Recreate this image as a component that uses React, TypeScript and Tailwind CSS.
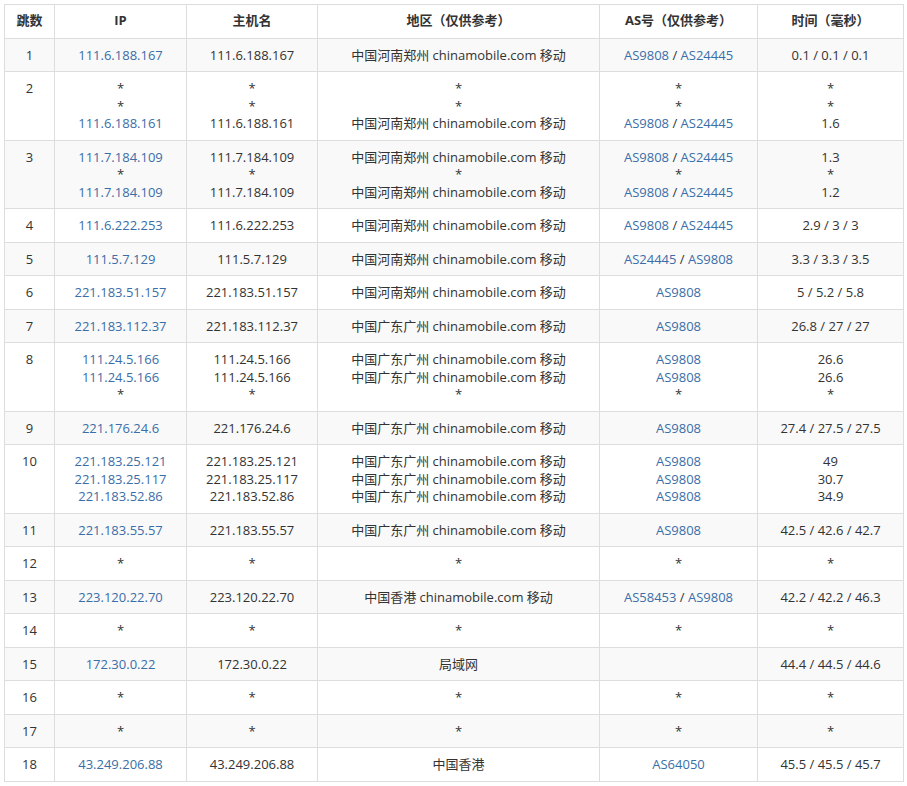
const HK = "中国香港 chinamobile.com 移动";
const ZZ = "中国河南郑州 chinamobile.com 移动";
const GZ = "中国广东广州 chinamobile.com 移动";

type Line = { ip: string; host: string; loc: string; as: string[]; t: string };
type Hop = { n: number; lines: Line[] };

const star: Line = { ip: "*", host: "*", loc: "*", as: ["*"], t: "*" };
const A1 = ["AS9808", "AS24445"];

const hops: Hop[] = [
  { n: 1, lines: [{ ip: "111.6.188.167", host: "111.6.188.167", loc: ZZ, as: A1, t: "0.1 / 0.1 / 0.1" }] },
  { n: 2, lines: [star, star, { ip: "111.6.188.161", host: "111.6.188.161", loc: ZZ, as: A1, t: "1.6" }] },
  {
    n: 3,
    lines: [
      { ip: "111.7.184.109", host: "111.7.184.109", loc: ZZ, as: A1, t: "1.3" },
      star,
      { ip: "111.7.184.109", host: "111.7.184.109", loc: ZZ, as: A1, t: "1.2" },
    ],
  },
  { n: 4, lines: [{ ip: "111.6.222.253", host: "111.6.222.253", loc: ZZ, as: A1, t: "2.9 / 3 / 3" }] },
  { n: 5, lines: [{ ip: "111.5.7.129", host: "111.5.7.129", loc: ZZ, as: ["AS24445", "AS9808"], t: "3.3 / 3.3 / 3.5" }] },
  { n: 6, lines: [{ ip: "221.183.51.157", host: "221.183.51.157", loc: ZZ, as: ["AS9808"], t: "5 / 5.2 / 5.8" }] },
  { n: 7, lines: [{ ip: "221.183.112.37", host: "221.183.112.37", loc: GZ, as: ["AS9808"], t: "26.8 / 27 / 27" }] },
  {
    n: 8,
    lines: [
      { ip: "111.24.5.166", host: "111.24.5.166", loc: GZ, as: ["AS9808"], t: "26.6" },
      { ip: "111.24.5.166", host: "111.24.5.166", loc: GZ, as: ["AS9808"], t: "26.6" },
      star,
    ],
  },
  { n: 9, lines: [{ ip: "221.176.24.6", host: "221.176.24.6", loc: GZ, as: ["AS9808"], t: "27.4 / 27.5 / 27.5" }] },
  {
    n: 10,
    lines: [
      { ip: "221.183.25.121", host: "221.183.25.121", loc: GZ, as: ["AS9808"], t: "49" },
      { ip: "221.183.25.117", host: "221.183.25.117", loc: GZ, as: ["AS9808"], t: "30.7" },
      { ip: "221.183.52.86", host: "221.183.52.86", loc: GZ, as: ["AS9808"], t: "34.9" },
    ],
  },
  { n: 11, lines: [{ ip: "221.183.55.57", host: "221.183.55.57", loc: GZ, as: ["AS9808"], t: "42.5 / 42.6 / 42.7" }] },
  { n: 12, lines: [star] },
  { n: 13, lines: [{ ip: "223.120.22.70", host: "223.120.22.70", loc: HK, as: ["AS58453", "AS9808"], t: "42.2 / 42.2 / 46.3" }] },
  { n: 14, lines: [star] },
  { n: 15, lines: [{ ip: "172.30.0.22", host: "172.30.0.22", loc: "局域网", as: [], t: "44.4 / 44.5 / 44.6" }] },
  { n: 16, lines: [star] },
  { n: 17, lines: [star] },
  { n: 18, lines: [{ ip: "43.249.206.88", host: "43.249.206.88", loc: "中国香港", as: ["AS64050"], t: "45.5 / 45.5 / 45.7" }] },
];

const link = "text-[#3a6ea8]";
const cell = "border border-[#ddd] px-2 pt-[8px] pb-[7px] align-top text-center";

function Lines({ items }: { items: React.ReactNode[] }) {
  return (
    <>
      {items.map((x, i) => (
        <div key={i}>{x}</div>
      ))}
    </>
  );
}

export default function App() {
  return (
    <div className="bg-white p-[4px] pr-[4px]" style={{ fontFamily: '"Open Sans", "Noto Sans CJK SC", sans-serif' }}>
      <table className="w-[899px] table-fixed border-collapse text-[13px] leading-[17.5px] text-[#333]">
        <colgroup>
          <col className="w-[50px]" />
          <col className="w-[132px]" />
          <col className="w-[131px]" />
          <col className="w-[282px]" />
          <col className="w-[158px]" />
          <col className="w-[146px]" />
        </colgroup>
        <thead>
          <tr className="font-bold">
            {["跳数", "IP", "主机名", "地区（仅供参考）", "AS号（仅供参考）", "时间（毫秒）"].map((h) => (
              <th key={h} className="border border-[#ddd] px-1 pt-[7px] pb-[8px] text-center font-bold">
                {h}
              </th>
            ))}
          </tr>
        </thead>
        <tbody>
          {hops.map((h) => (
            <tr key={h.n} className={h.n % 2 === 1 ? "bg-[#f9f9f9]" : "bg-white"}>
              <td className={cell}>{h.n}</td>
              <td className={cell}>
                <Lines items={h.lines.map((l) => (l.ip === "*" ? "*" : <span className={link}>{l.ip}</span>))} />
              </td>
              <td className={cell}>
                <Lines items={h.lines.map((l) => l.host)} />
              </td>
              <td className={cell}>
                <Lines items={h.lines.map((l) => l.loc)} />
              </td>
              <td className={cell}>
                <Lines
                  items={h.lines.map((l) =>
                    l.as.length === 0 ? (
                      "\u00a0"
                    ) : l.as[0] === "*" ? (
                      "*"
                    ) : (
                      <>
                        {l.as.map((a, i) => (
                          <span key={a}>
                            {i > 0 && " / "}
                            <span className={link}>{a}</span>
                          </span>
                        ))}
                      </>
                    )
                  )}
                />
              </td>
              <td className={cell}>
                <Lines items={h.lines.map((l) => l.t)} />
              </td>
            </tr>
          ))}
        </tbody>
      </table>
    </div>
  );
}
